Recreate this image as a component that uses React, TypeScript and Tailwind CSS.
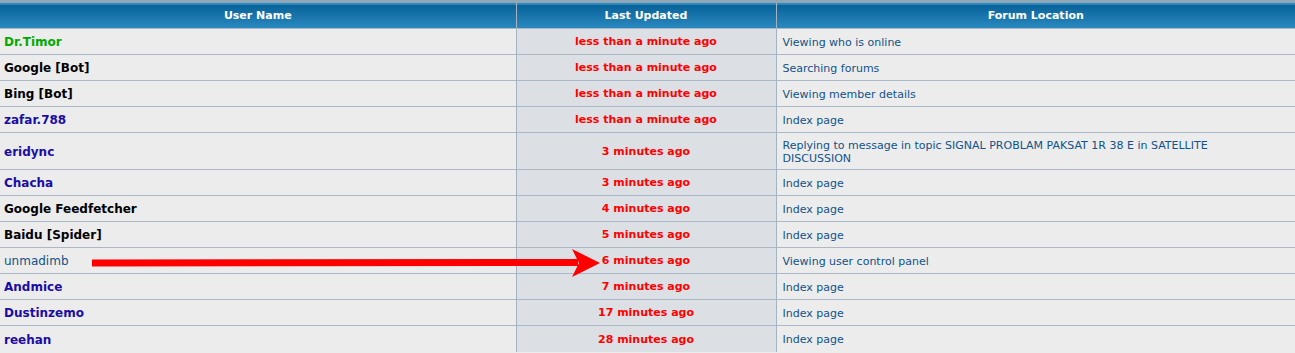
const rows = [
  { name: "Dr.Timor", color: "text-[#00aa00]", time: "less than a minute ago", loc: "Viewing who is online" },
  { name: "Google [Bot]", color: "text-black", time: "less than a minute ago", loc: "Searching forums" },
  { name: "Bing [Bot]", color: "text-black", time: "less than a minute ago", loc: "Viewing member details" },
  { name: "zafar.788", color: "text-[#1b0ca4]", time: "less than a minute ago", loc: "Index page" },
  { name: "eridync", color: "text-[#1b0ca4]", time: "3 minutes ago", loc: "Replying to message in topic SIGNAL PROBLAM PAKSAT 1R 38 E in SATELLITE DISCUSSION", tall: true },
  { name: "Chacha", color: "text-[#1b0ca4]", time: "3 minutes ago", loc: "Index page" },
  { name: "Google Feedfetcher", color: "text-black", time: "4 minutes ago", loc: "Index page" },
  { name: "Baidu [Spider]", color: "text-black", time: "5 minutes ago", loc: "Index page" },
  { name: "unmadimb", color: "text-[#105289]", time: "6 minutes ago", loc: "Viewing user control panel", plain: true, arrow: true },
  { name: "Andmice", color: "text-[#1b0ca4]", time: "7 minutes ago", loc: "Index page" },
  { name: "Dustinzemo", color: "text-[#1b0ca4]", time: "17 minutes ago", loc: "Index page" },
  { name: "reehan", color: "text-[#1b0ca4]", time: "28 minutes ago", loc: "Index page" },
];

// red arrow drawn over the unmadimb row
function Arrow() {
  return (
    <svg className="absolute left-[92px] top-1/2 -translate-y-[12px]" width="512" height="28" viewBox="0 0 512 28">
      <polygon points="0,10.5 486,10 486,17 0,17.5" fill="#ff0000" />
      <polygon points="480,0 508,14 480,28 487,14" fill="#ff0000" />
    </svg>
  );
}

export default function App() {
  return (
    <div className="w-[1295px] h-[353px] bg-[#ececec] overflow-hidden font-['DejaVu_Sans',sans-serif] text-[11px]">
      <table className="w-full border-collapse table-fixed">
        <thead>
          <tr className="h-[27px] border-t-[3px] border-[#8fa6b6] bg-gradient-to-b from-[#07629a] to-[#2a8bc1]">
            <th className="w-[516px] text-white font-bold text-center border-r border-[#a4b3c0] pt-[1px]">User Name</th>
            <th className="w-[260px] text-white font-bold text-center border-r border-[#a4b3c0] pt-[1px]">Last Updated</th>
            <th className="text-white font-bold text-center pt-[1px]">Forum Location</th>
          </tr>
        </thead>
        <tbody>
          {rows.map((r) => (
            <tr key={r.name} className={`${r.tall ? "h-[37px]" : "h-[26px]"} border-t border-[#a9b9ca]`}>
              <td className="relative px-[4px] pt-[2px] bg-[#ececec] border-r border-[#a4b3c0]">
                <span className={`${r.color} ${r.plain ? "font-normal" : "font-bold"} text-[12px]`}>{r.name}</span>
                {r.arrow && <Arrow />}
              </td>
              <td className="pt-[2px] bg-[#dce0e4] text-center text-[#ff0000] font-bold border-r border-[#a4b3c0]">{r.time}</td>
              <td className="pl-[6px] pr-[30px] pt-[2px] text-[#105289] leading-[13px]">{r.loc}</td>
            </tr>
          ))}
        </tbody>
      </table>
    </div>
  );
}
